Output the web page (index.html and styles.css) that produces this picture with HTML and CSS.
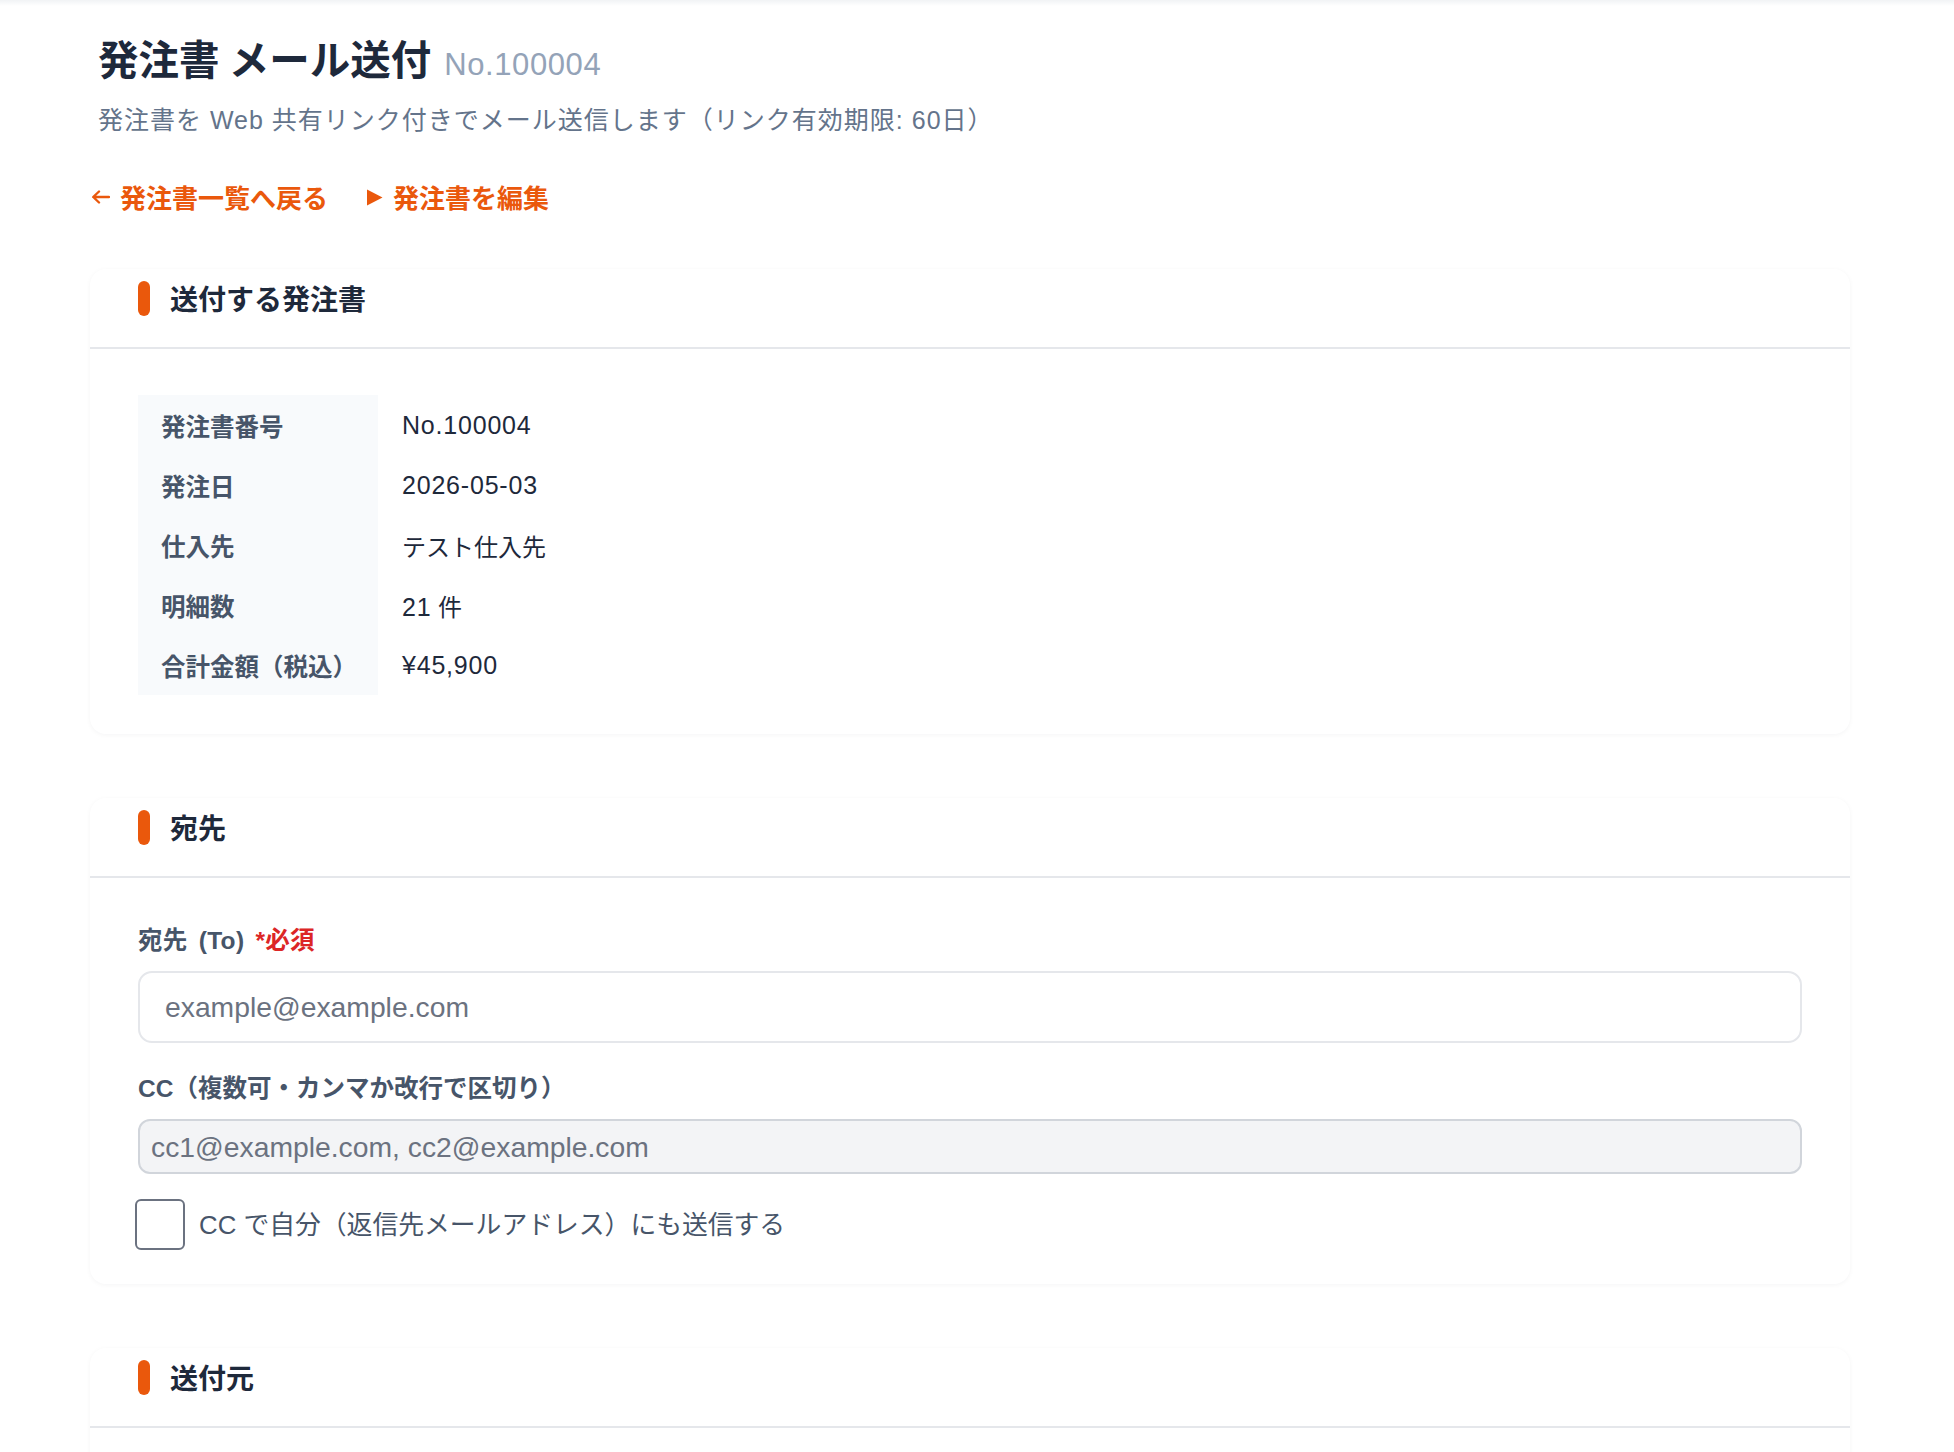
FILE: index.html
```html
<!DOCTYPE html>
<html lang="ja">
<head>
<meta charset="utf-8">
<title>発注書 メール送付</title>
<link rel="stylesheet" href="styles.css">
</head>
<body>
<div class="topbar"></div>
<main class="page">
  <header class="page-head">
    <h1 class="title">発注書 メール送付<span class="title-no">No.100004</span></h1>
    <p class="subtitle">発注書を Web 共有リンク付きでメール送信します（リンク有効期限: 60日）</p>
  </header>

  <nav class="links">
    <a class="link" href="#">
      <svg class="ico-arrow" width="19" height="14" viewBox="0 0 19 14" aria-hidden="true"><path d="M18 7H2.5M8 1.5L2.2 7L8 12.5" fill="none" stroke="#ea580c" stroke-width="2.4" stroke-linecap="round" stroke-linejoin="round"/></svg>
      <span>発注書一覧へ戻る</span>
    </a>
    <a class="link" href="#">
      <svg class="ico-play" width="17" height="17" viewBox="0 0 17 17" aria-hidden="true"><path d="M1 0.5L16.5 8.5L1 16.5Z" fill="#ea580c"/></svg>
      <span>発注書を編集</span>
    </a>
  </nav>

  <section class="card">
    <div class="card-head"><span class="bar"></span><h2>送付する発注書</h2></div>
    <div class="card-body card-body-info">
      <table class="info">
        <tr><th>発注書番号</th><td><span class="num">No.100004</span></td></tr>
        <tr><th>発注日</th><td><span class="num">2026-05-03</span></td></tr>
        <tr><th>仕入先</th><td>テスト仕入先</td></tr>
        <tr><th>明細数</th><td><span class="num">21</span> 件</td></tr>
        <tr><th>合計金額（税込）</th><td><span class="num">¥45,900</span></td></tr>
      </table>
    </div>
  </section>

  <section class="card">
    <div class="card-head"><span class="bar"></span><h2>宛先</h2></div>
    <div class="card-body card-body-form">
      <label class="field-label field-label-to" for="to">宛先 (To) <span class="req">*必須</span></label>
      <input class="input input-to" id="to" type="email" placeholder="example@example.com">
      <label class="field-label field-label-cc" for="cc">CC（複数可・カンマか改行で区切り）</label>
      <textarea class="input input-cc" id="cc" rows="1" placeholder="cc1@example.com, cc2@example.com"></textarea>
      <label class="check-row">
        <input class="check" type="checkbox">
        <span>CC で自分（返信先メールアドレス）にも送信する</span>
      </label>
    </div>
  </section>

  <section class="card">
    <div class="card-head"><span class="bar"></span><h2>送付元</h2></div>
    <div class="card-body card-body-from"></div>
  </section>
</main>
</body>
</html>
```

FILE: styles.css
```css
* {
  box-sizing: border-box;
  margin: 0;
  padding: 0;
}

body {
  background: #ffffff;
  font-family: "Liberation Sans", "Noto Sans CJK JP", sans-serif;
  color: #1e293b;
}

.topbar {
  height: 6px;
  background: linear-gradient(#f1f3f5, #ffffff);
}

.page {
  width: 1760px;
  margin-left: 90px;
  padding-top: 26px;
  padding-bottom: 80px;
}

.page-head {
  padding-left: 8px;
}

.title {
  font-family: "Noto Sans CJK JP", sans-serif;
  font-size: 40.5px;
  line-height: 52px;
  font-weight: 700;
  color: #1e293b;
}

.title-no {
  font-family: "Liberation Sans", sans-serif;
  font-size: 31px;
  font-weight: 400;
  color: #94a3b8;
  margin-left: 13px;
  letter-spacing: 0.6px;
}

.subtitle {
  margin-top: 11px;
  font-size: 25px;
  line-height: 36px;
  letter-spacing: 1px;
  color: #64748b;
}

.links {
  display: flex;
  gap: 38px;
  margin-top: 41px;
  padding-left: 1px;
}

.link {
  display: inline-flex;
  align-items: center;
  gap: 10px;
  color: #ea580c;
  font-family: "Noto Sans CJK JP", sans-serif;
  font-weight: 700;
  font-size: 26px;
  line-height: 36px;
  text-decoration: none;
}

.card {
  margin-top: 54px;
  background: #ffffff;
  border-radius: 16px;
  box-shadow: 0 1px 5px rgba(15, 23, 42, 0.045);
}

.card + .card {
  margin-top: 64px;
}

.card-head {
  display: flex;
  align-items: center;
  gap: 20px;
  padding: 12px 48px 31px;
  border-bottom: 2px solid #e5e7eb;
}

.bar {
  width: 12px;
  height: 35px;
  border-radius: 6px;
  background: #ea580c;
}

.card-head h2 {
  font-family: "Noto Sans CJK JP", sans-serif;
  font-size: 28px;
  line-height: 35px;
  font-weight: 700;
  color: #1e293b;
}

.card-body-info {
  padding: 46px 48px 39px;
}

.info {
  border-collapse: collapse;
}

.info th,
.info td {
  height: 60px;
  font-size: 24px;
  text-align: left;
  vertical-align: middle;
}

.info th {
  width: 240px;
  padding-left: 23px;
  background: #f8fafc;
  color: #475569;
  font-weight: 700;
  font-size: 24.5px;
  font-family: "Noto Sans CJK JP", sans-serif;
}

.info td {
  padding-left: 24px;
  color: #1e293b;
  font-weight: 400;
}

.num {
  font-size: 25px;
  letter-spacing: 0.8px;
}

.card-body-form {
  display: flex;
  flex-direction: column;
  padding: 46px 48px 34px 48px;
}

.field-label {
  font-size: 24.5px;
  line-height: 34px;
  font-weight: 700;
  color: #475569;
}

.field-label-to {
  word-spacing: 4px;
  letter-spacing: 0.3px;
}

.req {
  color: #dc2626;
}

.field-label-cc {
  margin-top: 29px;
}

.input {
  display: block;
  width: 100%;
  margin-top: 13px;
  font-family: "Liberation Sans", "Noto Sans CJK JP", sans-serif;
  font-size: 28.3px;
  color: #1e293b;
  outline: none;
}

.input::placeholder {
  color: #6b7280;
  opacity: 1;
}

.input-to {
  height: 72px;
  padding: 0 25px;
  border: 2px solid #e5e7eb;
  border-radius: 14px;
  background: #ffffff;
}

.input-cc {
  height: 55px;
  padding: 10px 11px 0;
  line-height: 32px;
  border: 2px solid #d1d5db;
  border-radius: 12px;
  background: #f3f4f6;
  resize: none;
  overflow: hidden;
}

.check-row {
  display: flex;
  align-items: center;
  gap: 14px;
  margin-top: 25px;
  margin-left: -3px;
  font-size: 25.8px;
  line-height: 36px;
  color: #475569;
}

.check {
  appearance: none;
  -webkit-appearance: none;
  width: 50px;
  height: 51px;
  border: 2px solid #6b7280;
  border-radius: 6px;
  background: #ffffff;
  flex: none;
}

.card-body-from {
  height: 320px;
}
```
